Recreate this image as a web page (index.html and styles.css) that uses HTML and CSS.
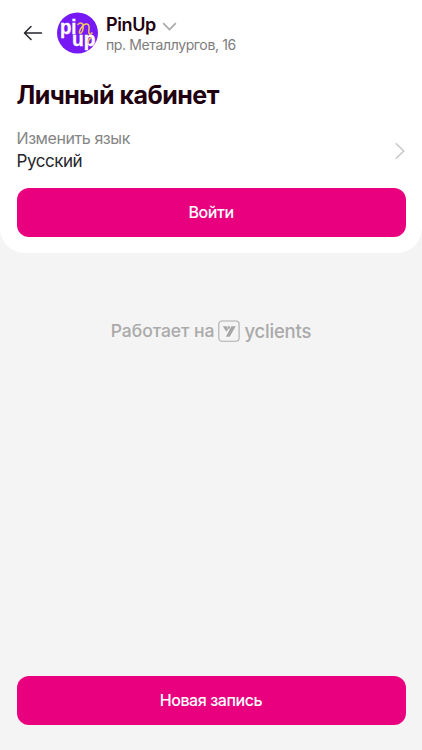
FILE: index.html
```html
<!DOCTYPE html>
<html lang="ru">
<head>
<meta charset="utf-8">
<meta name="viewport" content="width=device-width, initial-scale=1">
<title>Личный кабинет</title>
<link rel="stylesheet" href="styles.css">
</head>
<body>
<main class="page">
  <section class="card">
    <header class="header">
      <svg class="back" width="20" height="16" viewBox="0 0 20 16"><path d="M18.500 8H1.500M8 1.500 1.500 8 8 14.500"/></svg>
      <svg class="avatar" width="42" height="42" viewBox="0 0 42 42">
        <circle cx="20.500" cy="21" r="20.500" fill="#7619f4"/>
        <text x="3" y="22" textLength="16.500" lengthAdjust="spacingAndGlyphs">pi</text>
        <text x="15" y="33.800" textLength="23.500" lengthAdjust="spacingAndGlyphs">up</text>
        <path d="M21 12.500c2-2.200 5.200-2 5.200 2 0 3.500-1.200 7-3 6.800-2.200-.5.800-5.800 3.400-8.200 2.200-2 5.500-1.600 5.500 2 0 3-1 5.500.3 6.800 1 .8 2.100 0 2.600-1M33.800 25.800c-1.800 1-2.600 3.200-2.800 5.200" fill="none" stroke="#f2c65f" stroke-width="1.500" stroke-linecap="round"/>
      </svg>
      <div class="place">
        <div class="name"><span>PinUp</span><svg width="15" height="9" viewBox="0 0 15 9"><path d="m1.200 1.200 6.300 6.300 6.300-6.300"/></svg></div>
        <div class="address">пр. Металлургов, 16</div>
      </div>
    </header>
    <h1 class="title">Личный кабинет</h1>
    <div class="language">
      <div>
        <div class="label">Изменить язык</div>
        <div class="value">Русский</div>
      </div>
      <svg width="11" height="18" viewBox="0 0 11 18"><path d="m.8 1.300 7.900 7.700-7.900 7.700"/></svg>
    </div>
    <button class="button enter">Войти</button>
  </section>
  <div class="powered">
    <span class="works">Работает на</span>
    <svg width="22" height="22" viewBox="0 0 22 22"><rect x=".8" y="1" width="20.300" height="20.300" rx="3.200" fill="none" stroke="#adadad" stroke-width="1.100"/><path d="M4.800 6.300h3.600l1.700 2.900-1.700 2.500ZM9 6.300h2.600l.5 1.500-1.300 1.600ZM13.400 6.300h4.300l-6 10.500H7.900Z" fill="#a6a6a6"/></svg>
    <span class="brand">yclients</span>
  </div>
  <button class="button booking">Новая запись</button>
</main>
</body>
</html>
```
FILE: styles.css
```css
* { box-sizing: border-box; }
body { margin: 0; background: #f4f4f4; font-family: Inter, sans-serif; color: #25262c; }
.page { min-height: 750px; display: flex; flex-direction: column; align-items: stretch; padding-bottom: 25px; }
.card { height: 252.5px; background: #fff; border-radius: 0 0 25px 25px; padding: 12px 16.5px 0; }
.header { height: 42px; display: flex; align-items: center; padding-left: 6.5px; }
.back { fill: none; stroke: #25262c; stroke-width: 1.5; stroke-linecap: round; stroke-linejoin: round; }
.avatar { margin-left: 14px; }
.avatar text { font: 700 20.5px "Liberation Sans", sans-serif; fill: #fff; stroke: #fff; stroke-width: .3; }
.place { margin-left: 7px; }
.name { display: flex; align-items: center; gap: 6px; height: 22px; margin-top: 1px; font-size: 18px; font-weight: 600; line-height: 22px; letter-spacing: -.4px; color: #21000f; }
.name svg { margin-top: 2px; }
.name path { fill: none; stroke: #aaa; stroke-width: 1.7; }
.address { font-size: 14px; line-height: 17px; letter-spacing: -.37px; color: #7d7d7d; }
.title { margin: 26px 0 0; font-size: 25px; line-height: 30px; font-weight: 700; letter-spacing: -.52px; color: #21000f; white-space: nowrap; }
.language { margin-top: 17px; height: 46px; display: flex; align-items: center; justify-content: space-between; }
.language > svg { margin-top: 2px; fill: none; stroke: #c9c9c9; stroke-width: 1.6; }
.label { font-size: 16px; line-height: 22px; letter-spacing: -.42px; color: #858585; }
.value { font-size: 17px; line-height: 24px; letter-spacing: -.45px; }
.button { display: block; width: 100%; height: 49px; margin-top: 14.5px; padding: 0 0 1px; border: 0; border-radius: 12px; background: #e8007f; color: #fff; font: 500 16px/46px Inter, sans-serif; letter-spacing: -.42px; }
.powered { margin-top: 67.5px; height: 22px; display: flex; align-items: center; justify-content: center; color: #aaa; white-space: nowrap; }
.works { font-size: 17.5px; line-height: 20px; font-weight: 500; letter-spacing: -.05px; margin: -1px 4px 0 0; }
.brand { font: 500 18.5px/22px Inter, sans-serif; letter-spacing: -.2px; margin: 0 0 1px 4px; }
.booking { width: auto; margin: auto 16.5px 0; }
```
